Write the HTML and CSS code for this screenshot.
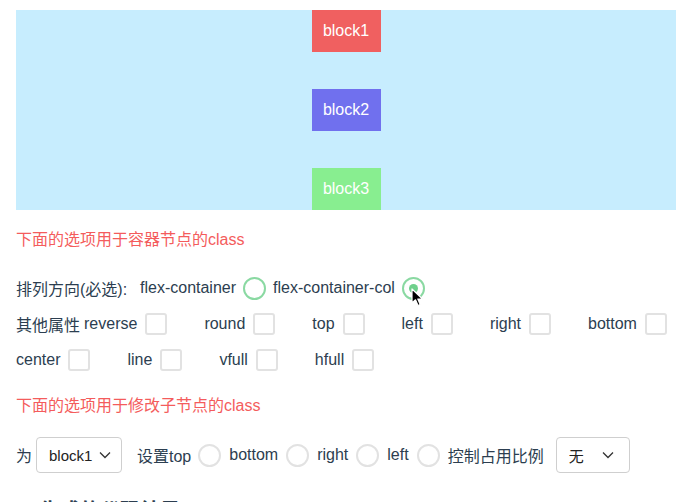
FILE: index.html
```html
<!DOCTYPE html>
<html lang="en">

<head>
    <meta charset="UTF-8">
    <meta name="viewport" content="width=device-width, initial-scale=1.0">
    <title>Flex Demo</title>
    <link rel="stylesheet" href="styles.css">
</head>

<body>
    <div id="app">
        <div class="flex-container">
            <div class="block block1">block1</div>
            <div class="block block2">block2</div>
            <div class="block block3">block3</div>
        </div>

        <p class="tip tip-first">下面的选项用于容器节点的class</p>

        <div class="row row-direction">
            <span class="label">排列方向(必选):</span>
            <span class="opt">flex-container</span>
            <span class="radio green"></span>
            <span class="opt">flex-container-col</span>
            <span class="radio green checked">
                <svg class="cursor" width="14" height="20" viewBox="0 0 14 20">
                    <path d="M1 1 L1 15 L4.5 11.8 L7 17.5 L9.2 16.5 L6.8 11 L11.5 11 Z" fill="#000" stroke="#fff" stroke-width="1.2" stroke-linejoin="round" />
                </svg>
            </span>
        </div>

        <div class="row row-checks">
            <span class="item"><span class="prefix">其他属性</span>reverse<span class="check"></span></span>
            <span class="item">round<span class="check"></span></span>
            <span class="item">top<span class="check"></span></span>
            <span class="item">left<span class="check"></span></span>
            <span class="item">right<span class="check"></span></span>
            <span class="item">bottom<span class="check"></span></span>
        </div>

        <div class="row row-checks">
            <span class="item">center<span class="check"></span></span>
            <span class="item">line<span class="check"></span></span>
            <span class="item">vfull<span class="check"></span></span>
            <span class="item">hfull<span class="check"></span></span>
        </div>

        <p class="tip tip-second">下面的选项用于修改子节点的class</p>

        <div class="row row-child">
            <span class="label">为</span>
            <div class="select select-block">
                <span>block1</span>
                <svg width="12" height="8" viewBox="0 0 12 8"><path d="M1 1.5 L6 6.5 L11 1.5" fill="none" stroke="#333" stroke-width="1.3" /></svg>
            </div>
            <span class="label set">设置top</span>
            <span class="radio"></span>
            <span class="opt">bottom</span>
            <span class="radio"></span>
            <span class="opt">right</span>
            <span class="radio"></span>
            <span class="opt">left</span>
            <span class="radio"></span>
            <span class="opt">控制占用比例</span>
            <div class="select select-ratio">
                <span>无</span>
                <svg width="12" height="8" viewBox="0 0 12 8"><path d="M1 1.5 L6 6.5 L11 1.5" fill="none" stroke="#333" stroke-width="1.3" /></svg>
            </div>
        </div>

        <h3 class="code-title">生成的代码结果</h3>
    </div>
</body>

</html>
```

FILE: styles.css
```css
* {
    margin: 0;
    padding: 0;
    box-sizing: border-box;
}

body {
    font-family: "Liberation Sans", "Noto Sans CJK SC", sans-serif;
    font-size: 16px;
    color: #2c3e50;
    background: #fff;
    overflow: hidden;
}

#app {
    padding: 10px 10px 0 16px;
}

.flex-container {
    display: flex;
    flex-direction: column;
    justify-content: space-between;
    align-items: center;
    width: 660px;
    height: 200px;
    background-color: #c7edfe;
}

.block {
    width: 69px;
    height: 42px;
    line-height: 42px;
    text-align: center;
    color: #fff;
    font-size: 16px;
}

.block1 {
    background-color: #f06060;
}

.block2 {
    background-color: #7070ee;
}

.block3 {
    background-color: #88ee90;
}

.tip {
    color: #f45c5c;
    line-height: 22px;
}

.tip-first {
    margin-top: 19px;
}

.tip-second {
    margin-top: 23px;
}

.row {
    display: flex;
    align-items: center;
    height: 24px;
    white-space: nowrap;
}

.row-direction {
    margin-top: 25px;
}

.row-direction .label {
    width: 117px;
    flex-shrink: 0;
}

.row-checks {
    margin-top: 12px;
}

.opt {
    margin: 0 7px;
}

.radio {
    position: relative;
    display: inline-block;
    width: 23px;
    height: 23px;
    border: 2px solid #e2e2e2;
    border-radius: 50%;
    flex-shrink: 0;
}

.radio.green {
    border-color: #8ad9a2;
}

.radio.checked::after {
    content: "";
    position: absolute;
    left: 5px;
    top: 5px;
    width: 9px;
    height: 9px;
    border-radius: 50%;
    background-color: #6fd08b;
}

.cursor {
    position: absolute;
    left: 7px;
    top: 9px;
    z-index: 2;
}

.item {
    display: flex;
    align-items: center;
    margin-right: 37px;
    flex-shrink: 0;
}

.prefix {
    margin-right: 4px;
}

.check {
    display: inline-block;
    width: 22px;
    height: 22px;
    margin-left: 8px;
    border: 2px solid #e2e2e2;
    border-radius: 3px;
}

.row-child {
    height: 36px;
    margin-top: 20px;
}

.row-child .opt {
    margin: 0 8px;
}

.select {
    display: flex;
    align-items: center;
    justify-content: space-between;
    height: 36px;
    border: 1px solid #cfcfcf;
    border-radius: 4px;
    color: #222;
    font-size: 15px;
    flex-shrink: 0;
}

.select-block {
    width: 86px;
    margin-left: 4px;
    padding: 0 10px 0 12px;
}

.select-ratio {
    width: 74px;
    margin-left: 4px;
    padding: 0 15px 0 12px;
}

.set {
    margin: 0 7px 0 15px;
}

.code-title {
    margin: 24px 0 0 24px;
    font-size: 20px;
    line-height: 28px;
    color: #2c3e50;
}
```
